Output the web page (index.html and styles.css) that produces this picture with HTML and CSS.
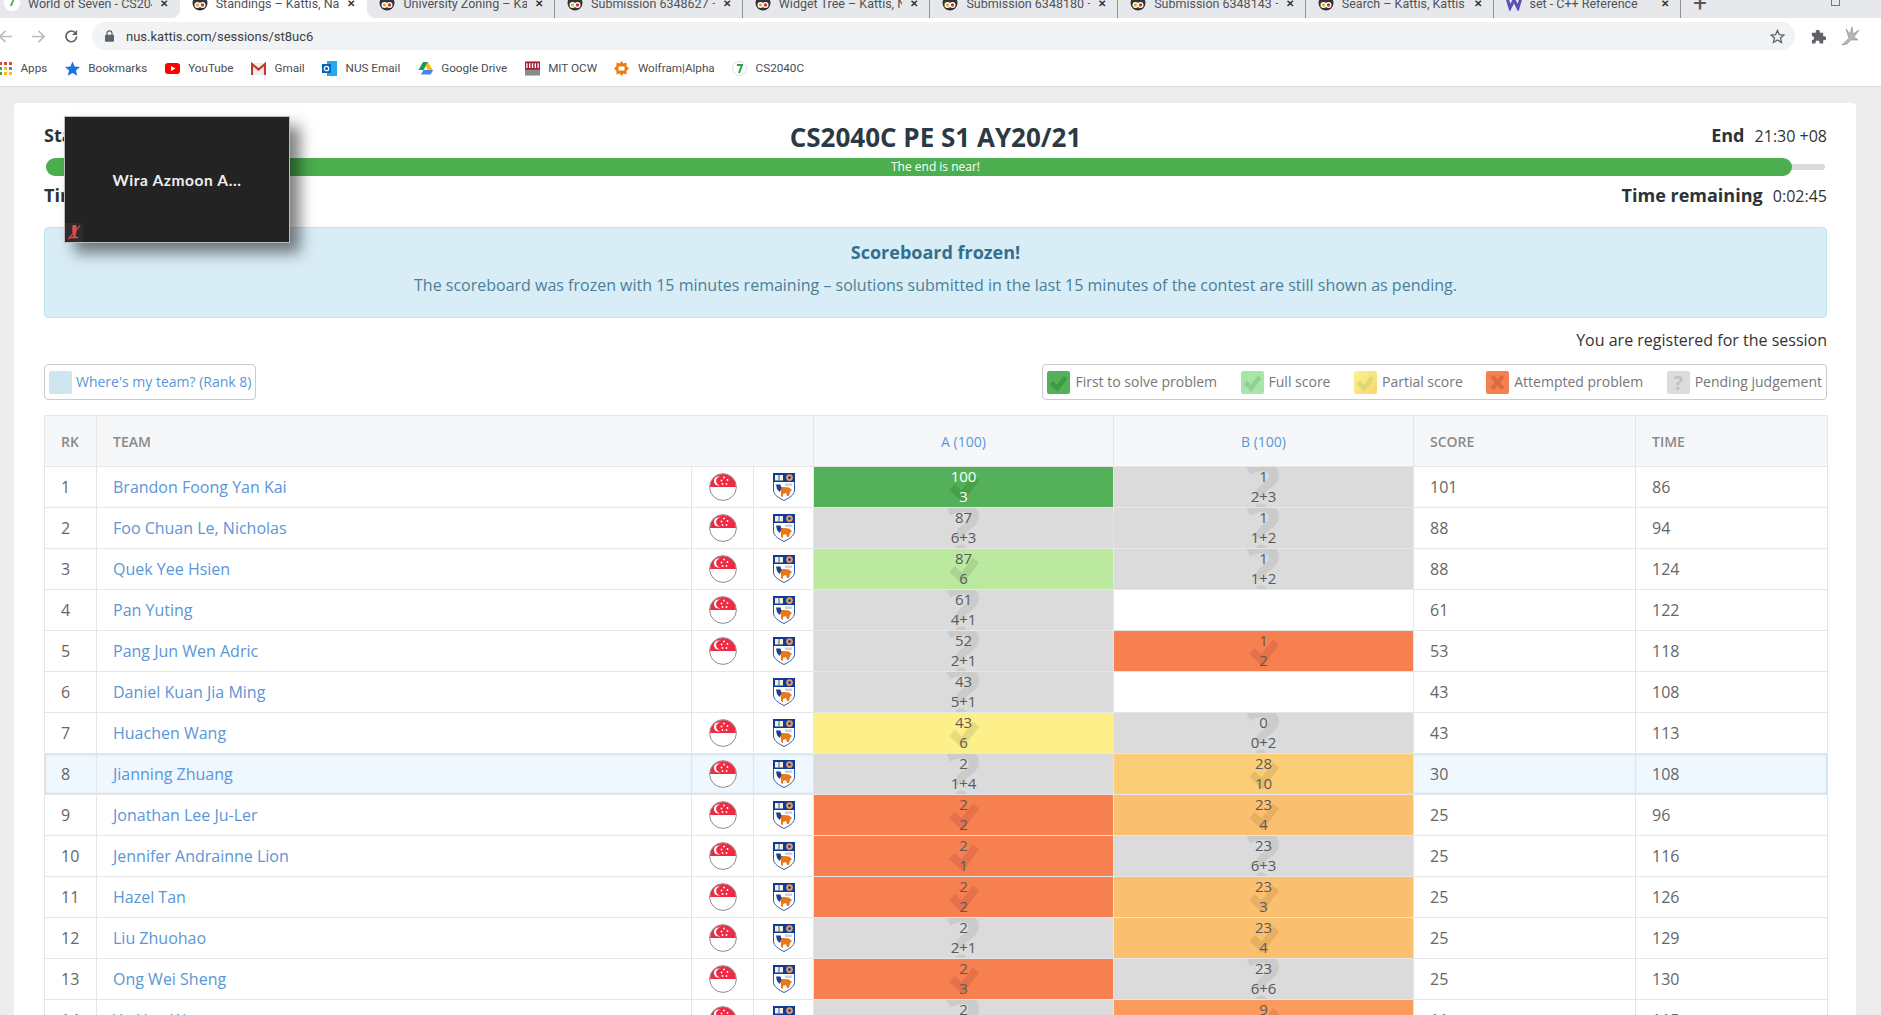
FILE: index.html
```html
<!DOCTYPE html>
<html lang="en">
<head>
<meta charset="utf-8">
<title>Standings – Kattis</title>
<link rel="stylesheet" href="styles.css">
</head>
<body>
<svg class="defs" aria-hidden="true">
  <symbol id="check" viewBox="0 0 32 30"><path d="M4 15 L14 24.5 L28 6" fill="none" stroke="currentColor" stroke-width="8"/></symbol>
  <symbol id="cross" viewBox="0 0 24 24"><path d="M5 4 L19 20 M19 4 L5 20" fill="none" stroke="currentColor" stroke-width="5"/></symbol>
  <symbol id="flag" viewBox="0 0 28 28">
    <circle cx="14" cy="14" r="13.5" fill="#fff"/>
    <path d="M1 14 A13 13 0 0 1 27 14 Z" fill="#ef2a42"/>
    <circle cx="9.5" cy="8" r="4.6" fill="#fff"/><circle cx="11.3" cy="8" r="4.2" fill="#ef2a42"/>
    <circle cx="15" cy="4.5" r=".9" fill="#fff"/><circle cx="18.5" cy="7" r=".9" fill="#fff"/><circle cx="17.5" cy="11" r=".9" fill="#fff"/><circle cx="13.5" cy="11" r=".9" fill="#fff"/><circle cx="12.5" cy="7.5" r=".9" fill="#fff"/>
    <circle cx="14" cy="14" r="13.4" fill="none" stroke="#8d8d8d" stroke-width="1"/>
  </symbol>
  <symbol id="crest" viewBox="0 0 22 28">
    <path d="M.5 .5 H21.5 V17 C21.5 22 16 25 11 27.5 C6 25 .5 22 .5 17 Z" fill="#fff" stroke="#2b55b0" stroke-width="1"/>
    <rect width="22" height="9" fill="#0f3a97"/>
    <path d="M2 2 H10 V7.5 H2 Z" fill="#f4f0dc"/><path d="M6 2 V7.5" stroke="#0f3a97" stroke-width=".8"/>
    <circle cx="16.5" cy="4.6" r="3.4" fill="#e89a5a"/><circle cx="16.5" cy="4.6" r="1.3" fill="#0f3a97"/>
    <path d="M6 14 L11 14 L16 14.5 L19 17 L17 19 L16 23 L14 23 L13 20 L10 21 L10 24 L8 23 L8 19 Z" fill="#e9781a"/>
    <path d="M3 11.5 L7.5 11.5 L8.5 15 L6.5 19 L4 16 Z" fill="#1d3f8f"/>
    <rect x="12" y="10.5" width="7" height="2.4" fill="#c9cfe2"/>
  </symbol>
  <symbol id="kattis" viewBox="0 0 16 16"><circle cx="8" cy="8" r="7.5" fill="#333"/><circle cx="5.5" cy="10" r="3" fill="#fff"/><circle cx="10.5" cy="10" r="3" fill="#fff"/><circle cx="5.5" cy="10" r="1.7" fill="#e9b01c"/><circle cx="10.5" cy="10" r="1.7" fill="#d9302a"/></symbol>
</svg>

<div class="tabstrip">
  <div class="tab"><span class="fav seven">7</span><span class="tabname">World of Seven - CS204</span><span class="x">✕</span></div>
  <div class="tab active"><svg class="fav"><use href="#kattis"/></svg><span class="tabname">Standings – Kattis, Nati</span><span class="x">✕</span></div>
  <div class="tab sep"><svg class="fav"><use href="#kattis"/></svg><span class="tabname">University Zoning – Kat</span><span class="x">✕</span></div>
  <div class="tab sep"><svg class="fav"><use href="#kattis"/></svg><span class="tabname">Submission 6348627 –</span><span class="x">✕</span></div>
  <div class="tab sep"><svg class="fav"><use href="#kattis"/></svg><span class="tabname">Widget Tree – Kattis, Na</span><span class="x">✕</span></div>
  <div class="tab sep"><svg class="fav"><use href="#kattis"/></svg><span class="tabname">Submission 6348180 –</span><span class="x">✕</span></div>
  <div class="tab sep"><svg class="fav"><use href="#kattis"/></svg><span class="tabname">Submission 6348143 –</span><span class="x">✕</span></div>
  <div class="tab sep"><svg class="fav"><use href="#kattis"/></svg><span class="tabname">Search – Kattis, Kattis</span><span class="x">✕</span></div>
  <div class="tab sep"><svg class="fav" viewBox="0 0 16 16"><path d="M1 3 L4 13 L8 5 L12 13 L15 3" fill="none" stroke="#5a50b8" stroke-width="3"/></svg><span class="tabname">set - C++ Reference</span><span class="x">✕</span></div>
  <div class="newtab">+</div>
  <div class="winctl"><span class="restore"></span></div>
</div>

<div class="toolbar">
  <svg class="nav" viewBox="0 0 16 16"><path d="M15 8 H2 M8 2 L2 8 L8 14" fill="none" stroke="#b9bcc0" stroke-width="1.8"/></svg>
  <svg class="nav" viewBox="0 0 16 16"><path d="M1 8 H14 M8 2 L14 8 L8 14" fill="none" stroke="#b9bcc0" stroke-width="1.8"/></svg>
  <svg class="nav" viewBox="0 0 16 16"><path d="M13.5 8 A5.7 5.7 0 1 1 11.8 3.8" fill="none" stroke="#5f6368" stroke-width="1.8"/><path d="M14 1 V6.5 H8.5 Z" fill="#5f6368"/></svg>
  <div class="omnibox">
    <svg class="lock" viewBox="0 0 10 13"><path d="M2.2 5.5 V3.6 A2.8 2.8 0 0 1 7.8 3.6 V5.5" fill="none" stroke="#5f6368" stroke-width="1.3"/><rect y="5" width="10" height="8" rx="1.2" fill="#5f6368"/></svg>
    <span class="url">nus.kattis.com/sessions/st8uc6</span>
    <svg class="star" viewBox="0 0 16 16"><path d="M8 1.5 L10 6 L14.8 6.4 L11.2 9.6 L12.3 14.4 L8 11.8 L3.7 14.4 L4.8 9.6 L1.2 6.4 L6 6 Z" fill="none" stroke="#5f6368" stroke-width="1.4"/></svg>
  </div>
  <svg class="puzzle" viewBox="0 0 16 16"><path d="M1 4 H5 V3 A2.2 2.2 0 0 1 9.4 3 V4 H13 V7.6 H14 A2.2 2.2 0 0 1 14 12 H13 V15.5 H9.2 V14.5 A2.2 2.2 0 0 0 4.8 14.5 V15.5 H1 V11.6 H2 A2.2 2.2 0 0 0 2 7.6 H1 Z" fill="#5f6368"/></svg>
  <svg class="avatar" viewBox="0 0 22 22"><path d="M3 20 L10 13 L7 4 L11 9 L13 2 L14 9 L20 5 L15 12 L19 15 L12 15 L8 19 Z" fill="#b4b8b4" stroke="#777" stroke-width=".5"/></svg>
</div>

<div class="bookmarks">
  <div class="bm"><svg class="bmi" viewBox="0 0 12 15"><g fill="#d9483b"><rect x="-1" y="1" width="3" height="3"/><rect x="4" y="1" width="3" height="3"/></g><rect x="9" y="1" width="3" height="3" fill="#ea4335"/><g fill="#34a853"><rect x="-1" y="6" width="3" height="3"/></g><rect x="4" y="6" width="3" height="3" fill="#fbbc05"/><rect x="9" y="6" width="3" height="3" fill="#4285f4"/><rect x="-1" y="11" width="3" height="3" fill="#34a853"/><rect x="4" y="11" width="3" height="3" fill="#fbbc05"/><rect x="9" y="11" width="3" height="3" fill="#fbbc05"/></svg><span>Apps</span></div>
  <div class="bm"><svg class="bmi" viewBox="0 0 15 15"><path d="M7.5 .5 L9.6 5.5 L15 5.9 L10.9 9.4 L12.2 14.7 L7.5 11.9 L2.8 14.7 L4.1 9.4 L0 5.9 L5.4 5.5 Z" fill="#1a73e8"/></svg><span>Bookmarks</span></div>
  <div class="bm"><svg class="bmi" viewBox="0 0 15 15"><rect y="2" width="15" height="11" rx="3" fill="#f00"/><path d="M6 5 L10.5 7.5 L6 10 Z" fill="#fff"/></svg><span>YouTube</span></div>
  <div class="bm"><svg class="bmi" viewBox="0 0 15 15"><rect y="2" width="15" height="12" fill="#eee"/><path d="M1 14 V3 L7.5 8.5 L14 3 V14" fill="none" stroke="#c0392b" stroke-width="2.2"/></svg><span>Gmail</span></div>
  <div class="bm"><svg class="bmi" viewBox="0 0 15 15"><rect x="5" y="0" width="10" height="15" fill="#28a8ea"/><rect y="3" width="9" height="9" fill="#0364b8"/><circle cx="4.5" cy="7.5" r="2.2" fill="none" stroke="#fff" stroke-width="1.3"/></svg><span>NUS Email</span></div>
  <div class="bm"><svg class="bmi" viewBox="0 0 15 15"><path d="M5 1 L10 1 L5.5 9 H0.5 Z" fill="#0f9d58"/><path d="M10 1 L15 9.5 L12.5 13.5 L7.5 5 Z" fill="#fbbc05"/><path d="M3 13.5 L5.5 9 H15 L12.5 13.5 Z" fill="#4285f4"/></svg><span>Google Drive</span></div>
  <div class="bm"><svg class="bmi" viewBox="0 0 16 15"><rect width="16" height="9" fill="#a31f34"/><rect y="9" width="16" height="6" fill="#8a8b8c"/><path d="M2 2 V7 M5 2 V7 M8 2 V7 M11 2 V7 M14 2 V7" stroke="#fff" stroke-width="1.4"/></svg><span>MIT OCW</span></div>
  <div class="bm"><svg class="bmi" viewBox="0 0 15 15"><path d="M7.5 0 L9.4 2.6 L12.5 1.6 L12.5 5 L15 7.5 L12.5 10 L12.5 13.4 L9.4 12.4 L7.5 15 L5.6 12.4 L2.5 13.4 L2.5 10 L0 7.5 L2.5 5 L2.5 1.6 L5.6 2.6 Z" fill="#ee7d11"/><rect x="4.5" y="5.5" width="6" height="4" fill="#fff"/></svg><span>Wolfram|Alpha</span></div>
  <div class="bm"><svg class="bmi" viewBox="0 0 15 15"><circle cx="7.5" cy="7.5" r="7" fill="#fff" stroke="#dde" stroke-width="1"/><path d="M5 4 H10 L7 12" fill="none" stroke="#2f9e44" stroke-width="2"/></svg><span>CS2040C</span></div>
</div>

<main class="page">
  <section class="card">
    <div class="head">
      <div class="stamp"><b>Start</b> 19:30 +08</div>
      <h1 class="title">CS2040C PE S1 AY20/21</h1>
      <div class="stamp right"><b>End</b> 21:30 +08</div>
    </div>
    <div class="track">
      <div class="fill"></div>
      <div class="barlabel">The end is near!</div>
    </div>
    <div class="times">
      <div class="stamp"><b>Time elapsed</b> 1:57:15</div>
      <div class="stamp right"><b>Time remaining</b> 0:02:45</div>
    </div>

    <div class="alert">
      <h2 class="alert-title">Scoreboard frozen!</h2>
      <p class="alert-body">The scoreboard was frozen with 15 minutes remaining – solutions submitted in the last 15 minutes of the contest are still shown as pending.</p>
    </div>

    <p class="registered">You are registered for the session</p>

    <div class="tools">
      <div class="box where"><span class="swatch sw-team"></span><a class="link">Where's my team? (Rank 8)</a></div>
      <div class="box legend">
        <span class="lg"><span class="swatch sw-first"><svg><use href="#check"/></svg></span>First to solve problem</span>
        <span class="lg"><span class="swatch sw-full"><svg><use href="#check"/></svg></span>Full score</span>
        <span class="lg"><span class="swatch sw-part"><svg><use href="#check"/></svg></span>Partial score</span>
        <span class="lg"><span class="swatch sw-att"><svg><use href="#cross"/></svg></span>Attempted problem</span>
        <span class="lg"><span class="swatch sw-pend">?</span>Pending judgement</span>
      </div>
    </div>

    <table class="board">
      <colgroup><col class="c-rk"><col class="c-team"><col class="c-flag"><col class="c-crest"><col class="c-prob"><col class="c-prob"><col class="c-score"><col class="c-time"></colgroup>
      <thead>
        <tr><th>RK</th><th colspan="3">TEAM</th><th class="prob"><a class="link">A (100)</a></th><th class="prob"><a class="link">B (100)</a></th><th>SCORE</th><th>TIME</th></tr>
      </thead>
      <tbody>
        <tr><td>1</td><td><a class="link">Brandon Foong Yan Kai</a></td><td class="ic"><svg class="flag"><use href="#flag"/></svg></td><td class="ic"><svg class="crest"><use href="#crest"/></svg></td>
          <td class="p"><div class="pc first"><svg class="ck"><use href="#check"/></svg><span>100</span><span>3</span></div></td><td class="p"><div class="pc pend"><span>1</span><span>2+3</span></div></td><td>101</td><td>86</td></tr>
        <tr><td>2</td><td><a class="link">Foo Chuan Le, Nicholas</a></td><td class="ic"><svg class="flag"><use href="#flag"/></svg></td><td class="ic"><svg class="crest"><use href="#crest"/></svg></td>
          <td class="p"><div class="pc pend"><span>87</span><span>6+3</span></div></td><td class="p"><div class="pc pend"><span>1</span><span>1+2</span></div></td><td>88</td><td>94</td></tr>
        <tr><td>3</td><td><a class="link">Quek Yee Hsien</a></td><td class="ic"><svg class="flag"><use href="#flag"/></svg></td><td class="ic"><svg class="crest"><use href="#crest"/></svg></td>
          <td class="p"><div class="pc s87"><svg class="ck"><use href="#check"/></svg><span>87</span><span>6</span></div></td><td class="p"><div class="pc pend"><span>1</span><span>1+2</span></div></td><td>88</td><td>124</td></tr>
        <tr><td>4</td><td><a class="link">Pan Yuting</a></td><td class="ic"><svg class="flag"><use href="#flag"/></svg></td><td class="ic"><svg class="crest"><use href="#crest"/></svg></td>
          <td class="p"><div class="pc pend"><span>61</span><span>4+1</span></div></td><td class="p"></td><td>61</td><td>122</td></tr>
        <tr><td>5</td><td><a class="link">Pang Jun Wen Adric</a></td><td class="ic"><svg class="flag"><use href="#flag"/></svg></td><td class="ic"><svg class="crest"><use href="#crest"/></svg></td>
          <td class="p"><div class="pc pend"><span>52</span><span>2+1</span></div></td><td class="p"><div class="pc att"><svg class="ck"><use href="#check"/></svg><span>1</span><span>2</span></div></td><td>53</td><td>118</td></tr>
        <tr><td>6</td><td><a class="link">Daniel Kuan Jia Ming</a></td><td class="ic"></td><td class="ic"><svg class="crest"><use href="#crest"/></svg></td>
          <td class="p"><div class="pc pend"><span>43</span><span>5+1</span></div></td><td class="p"></td><td>43</td><td>108</td></tr>
        <tr><td>7</td><td><a class="link">Huachen Wang</a></td><td class="ic"><svg class="flag"><use href="#flag"/></svg></td><td class="ic"><svg class="crest"><use href="#crest"/></svg></td>
          <td class="p"><div class="pc s43"><svg class="ck"><use href="#check"/></svg><span>43</span><span>6</span></div></td><td class="p"><div class="pc pend"><span>0</span><span>0+2</span></div></td><td>43</td><td>113</td></tr>
        <tr class="mine"><td>8</td><td><a class="link">Jianning Zhuang</a></td><td class="ic"><svg class="flag"><use href="#flag"/></svg></td><td class="ic"><svg class="crest"><use href="#crest"/></svg></td>
          <td class="p"><div class="pc pend"><span>2</span><span>1+4</span></div></td><td class="p"><div class="pc s28"><svg class="ck"><use href="#check"/></svg><span>28</span><span>10</span></div></td><td>30</td><td>108</td></tr>
        <tr><td>9</td><td><a class="link">Jonathan Lee Ju-Ler</a></td><td class="ic"><svg class="flag"><use href="#flag"/></svg></td><td class="ic"><svg class="crest"><use href="#crest"/></svg></td>
          <td class="p"><div class="pc att"><svg class="ck"><use href="#check"/></svg><span>2</span><span>2</span></div></td><td class="p"><div class="pc s23"><svg class="ck"><use href="#check"/></svg><span>23</span><span>4</span></div></td><td>25</td><td>96</td></tr>
        <tr><td>10</td><td><a class="link">Jennifer Andrainne Lion</a></td><td class="ic"><svg class="flag"><use href="#flag"/></svg></td><td class="ic"><svg class="crest"><use href="#crest"/></svg></td>
          <td class="p"><div class="pc att"><svg class="ck"><use href="#check"/></svg><span>2</span><span>1</span></div></td><td class="p"><div class="pc pend"><span>23</span><span>6+3</span></div></td><td>25</td><td>116</td></tr>
        <tr><td>11</td><td><a class="link">Hazel Tan</a></td><td class="ic"><svg class="flag"><use href="#flag"/></svg></td><td class="ic"><svg class="crest"><use href="#crest"/></svg></td>
          <td class="p"><div class="pc att"><svg class="ck"><use href="#check"/></svg><span>2</span><span>2</span></div></td><td class="p"><div class="pc s23"><svg class="ck"><use href="#check"/></svg><span>23</span><span>3</span></div></td><td>25</td><td>126</td></tr>
        <tr><td>12</td><td><a class="link">Liu Zhuohao</a></td><td class="ic"><svg class="flag"><use href="#flag"/></svg></td><td class="ic"><svg class="crest"><use href="#crest"/></svg></td>
          <td class="p"><div class="pc pend"><span>2</span><span>2+1</span></div></td><td class="p"><div class="pc s23"><svg class="ck"><use href="#check"/></svg><span>23</span><span>4</span></div></td><td>25</td><td>129</td></tr>
        <tr><td>13</td><td><a class="link">Ong Wei Sheng</a></td><td class="ic"><svg class="flag"><use href="#flag"/></svg></td><td class="ic"><svg class="crest"><use href="#crest"/></svg></td>
          <td class="p"><div class="pc att"><svg class="ck"><use href="#check"/></svg><span>2</span><span>3</span></div></td><td class="p"><div class="pc pend"><span>23</span><span>6+6</span></div></td><td>25</td><td>130</td></tr>
        <tr><td>14</td><td><a class="link">Yu Hao Wu</a></td><td class="ic"><svg class="flag"><use href="#flag"/></svg></td><td class="ic"><svg class="crest"><use href="#crest"/></svg></td>
          <td class="p"><div class="pc pend"><span>2</span><span>1+1</span></div></td><td class="p"><div class="pc s9"><svg class="ck"><use href="#check"/></svg><span>9</span><span>5</span></div></td><td>11</td><td>115</td></tr>
      </tbody>
    </table>
  </section>
</main>

<aside class="zoomtile">
  <span class="zoomname">Wira Azmoon A...</span>
  <span class="mute"><svg viewBox="0 0 16 18"><path d="M6 2 a2.5 2.5 0 0 1 5 0 V8 a2.5 2.5 0 0 1 -5 0 Z M3 14 H13 V16 H3 Z M7 10 H10 V14 H7 Z" fill="#e5484d"/><path d="M1 17 L15 1" stroke="#e5484d" stroke-width="1.5"/></svg></span>
</aside>
</body>
</html>
```

FILE: styles.css
```css
* { box-sizing: border-box; }
html, body { margin: 0; height: 1015px; overflow: hidden; }
body { font-family: "Open Sans", "Liberation Sans", sans-serif; font-size: 16px; color: #55595c; background: #ededed; position: relative; }
.defs { width: 0; height: 0; position: absolute; }

/* browser chrome */
.tabstrip { display: flex; align-items: flex-end; height: 18px; background: #e6e8eb; margin-left: -8px; font-family: Roboto, "Liberation Sans", sans-serif; font-size: 12.5px; color: #4f5358; }
.tab { position: relative; flex: 0 0 187.7px; min-width: 0; height: 30px; display: flex; align-items: center; padding: 0 12px; gap: 8px; }
.tab.active { background: #fff; }
.tab.active::before, .tab.active::after { content: ""; position: absolute; bottom: 0; width: 9px; height: 9px; }
.tab.active::before { left: -9px; background: radial-gradient(circle at 0 0, #e6e8eb 9px, #fff 9.5px); }
.tab.active::after { right: -9px; background: radial-gradient(circle at 100% 0, #e6e8eb 9px, #fff 9.5px); }
.tab.sep::after { content: ""; position: absolute; right: 0; bottom: 0; height: 18px; width: 1px; background: #8f9296; }
.fav { width: 16px; height: 16px; flex: none; }
.seven { background: #fff; border-radius: 50%; color: #2f9e44; font-weight: 700; font-size: 11px; text-align: center; line-height: 16px; }
.tabname { flex: 1; white-space: nowrap; overflow: hidden; min-width: 0; }
.x { flex: none; font-size: 10px; color: #333; font-weight: 700; }
.newtab { flex: 0 0 40px; height: 30px; line-height: 30px; font-size: 24px; color: #555; padding-left: 12px; }
.winctl { margin-left: auto; height: 18px; display: flex; padding-right: 41px; }
.restore { width: 9px; height: 6px; border: 1px solid #777; border-top: 0; }
.toolbar { height: 36px; background: #fff; display: flex; align-items: center; padding-right: 20px; }
.nav { width: 15px; height: 15px; flex: none; margin-right: 18px; }
.nav:first-child { margin-left: -2px; }
.nav:nth-child(3) { margin-right: 13px; }
.omnibox { flex: 1; height: 28px; border-radius: 14px; background: #f1f3f4; display: flex; align-items: center; padding: 0 10px 0 13px; font-family: Roboto, "Liberation Sans", sans-serif; font-size: 13px; color: #3c4043; }
.lock { width: 9px; height: 12px; margin-right: 12px; }
.url { flex: 1; }
.star { width: 15px; height: 15px; }
.puzzle { width: 15px; height: 15px; margin: 0 13px 0 16px; }
.avatar { width: 22px; height: 22px; }
.bookmarks { height: 33px; background: #fff; border-bottom: 1px solid #dcdcdc; display: flex; align-items: center; gap: 17.4px; font-family: Roboto, "Liberation Sans", sans-serif; font-size: 11.7px; color: #4a4d52; padding-bottom: 4px; }
.bm { display: flex; align-items: center; gap: 8.5px; }
.bmi { width: 15px; height: 15px; flex: none; }
.bm:first-child .bmi { width: 12px; }

/* page */
.page { padding: 16px 25px 0 14px; }
.card { background: #fff; border-radius: 4px; padding: 18px 29px 0 30px; height: 1000px; }
.head { display: grid; grid-template-columns: 1fr auto 1fr; align-items: center; height: 35px; }
.title { margin: 0 0 2px; font-size: 26px; font-weight: 700; color: #2b3a42; line-height: 33px; }
.head .stamp { margin-bottom: 8px; }
.stamp { font-size: 16px; color: #333; }
.stamp b { font-size: 18px; margin-right: 6px; color: #2b3338; }
.right { text-align: right; }
.track { position: relative; height: 18px; margin: 2px 2px 0; display: flex; align-items: center; }
.track::before { content: ""; position: absolute; left: 0; right: 0; height: 6px; top: 6px; background: #dadada; border-radius: 3px; }
.fill { position: relative; height: 18px; width: 1746px; background: #4bae4f; border-radius: 9px; }
.barlabel { position: absolute; left: 0; right: 0; top: 0; text-align: center; color: #fff; font-size: 12px; line-height: 18px; }
.times { display: flex; justify-content: space-between; align-items: center; height: 38px; }
.alert { margin-top: 13px; height: 91px; background: #d9edf7; border: 1px solid #bce8f1; border-radius: 4px; text-align: center; color: #31708f; padding-top: 12px; }
.alert-title { margin: 0; font-size: 18px; font-weight: 700; line-height: 24px; }
.alert-body { margin: 9px 0 0; font-size: 16px; line-height: 24px; color: #4b7f98; }
.registered { margin: 10px 0 0; height: 24px; line-height: 24px; text-align: right; color: #333; font-size: 16px; }
.tools { display: flex; justify-content: space-between; margin-top: 12px; }
.box { height: 36px; border: 1px solid #ccc; border-radius: 4px; display: flex; align-items: center; padding: 0 4px; font-size: 14px; line-height: 20px; color: #777; }
.where { gap: 4px; }
.legend { gap: 23.5px; }
.lg { display: flex; align-items: center; gap: 5px; white-space: nowrap; }
.swatch { width: 23px; height: 23px; flex: none; border-radius: 2px; display: flex; align-items: center; justify-content: center; }
.swatch svg { width: 19px; height: 19px; }
.sw-team { background: #cfe5f0; }
.sw-first { background: #55b05a; color: #3f9a45; }
.sw-full { background: #a8e5a8; color: #90d092; }
.sw-part { background: linear-gradient(135deg, #f5f58e, #ffd36e); color: #e0d878; }
.sw-att { background: #f78050; color: #dd6b3e; }
.sw-pend { background: #dcdcdc; color: #c2c2c2; font-weight: 700; font-size: 20px; line-height: 23px; }
.link { color: #5a96d8; text-decoration: none; }

/* scoreboard */
.board { margin-top: 15px; width: 1783px; table-layout: fixed; border-collapse: collapse; }
.c-rk { width: 52px; } .c-team { width: 595px; } .c-flag { width: 62px; } .c-crest { width: 60px; }
.c-prob { width: 300px; } .c-score { width: 222px; } .c-time { width: 192px; }
.board th, .board td { border: 1px solid #e6e6e6; padding: 0 0 0 16px; text-align: left; }
.board th { height: 51px; background: #f6f7f9; font-size: 14px; font-weight: 600; color: #8a8a8a; }
.board th.prob { text-align: center; padding: 0; font-weight: 400; }
.board td { height: 41px; font-size: 16px; color: #666; }
.board td.ic, .board td.p { padding: 0; text-align: center; }
.flag { width: 28px; height: 28px; display: block; margin: 0 auto; }
.crest { width: 22px; height: 28px; display: block; margin: 0 auto; }
.mine td { background: #eff7ff; box-shadow: inset 0 2px 2px -1px #cfe0ea, inset 0 -2px 2px -1px #cfe0ea; }
.mine td:first-child { box-shadow: inset 2px 0 1px -1px #cfe0ea, inset 0 2px 2px -1px #cfe0ea, inset 0 -2px 2px -1px #cfe0ea; }
.mine td:last-child { box-shadow: inset -2px 0 1px -1px #cfe0ea, inset 0 2px 2px -1px #cfe0ea, inset 0 -2px 2px -1px #cfe0ea; }
.pc { position: relative; height: 40px; overflow: hidden; display: flex; flex-direction: column; align-items: center; font-size: 15px; line-height: 20px; color: #5a5a5a; }
.pc span { position: relative; }
.pc span:first-of-type { margin-top: -1px; }
.ck { position: absolute; left: 50%; top: 5px; width: 32px; height: 30px; margin-left: -16px; }
.pend { background: #dbdbdb; }
.pend::before { content: "?"; position: absolute; left: 0; right: 0; top: -20px; font-size: 72px; line-height: 80px; font-weight: 700; color: #cbcbcb; }
.first { background: #55b05a; color: #fff; }
.first .ck { color: #46a04b; }
.s87 { background: #bbe9a0; }
.s87 .ck { color: #a8d690; }
.s43 { background: #fdf08a; }
.s43 .ck { color: #e6da7c; }
.s28 { background: #fbcd76; }
.s28 .ck { color: #e8bb68; }
.s23 { background: #fbc06f; }
.s23 .ck { color: #e8ae62; }
.s9 { background: #fa9a5c; }
.s9 .ck { color: #e58a50; }
.att { background: #f78050; }
.att .ck { color: #e5714a; }

/* floating video tile */
.zoomtile { position: absolute; left: 64px; top: 116px; width: 226px; height: 127px; background: #232323; border: 1px solid #bdbdbd; box-shadow: 10px 10px 14px rgba(0, 0, 0, .5); display: flex; align-items: center; justify-content: center; color: #eee; font-family: Lato, "Open Sans", sans-serif; font-weight: 700; font-size: 15.5px; letter-spacing: .6px; }
.mute { position: absolute; left: 0; bottom: 0; width: 18px; height: 19px; background: #2d2d2d; display: flex; align-items: center; justify-content: center; }
.mute svg { width: 14px; height: 15px; }
```
